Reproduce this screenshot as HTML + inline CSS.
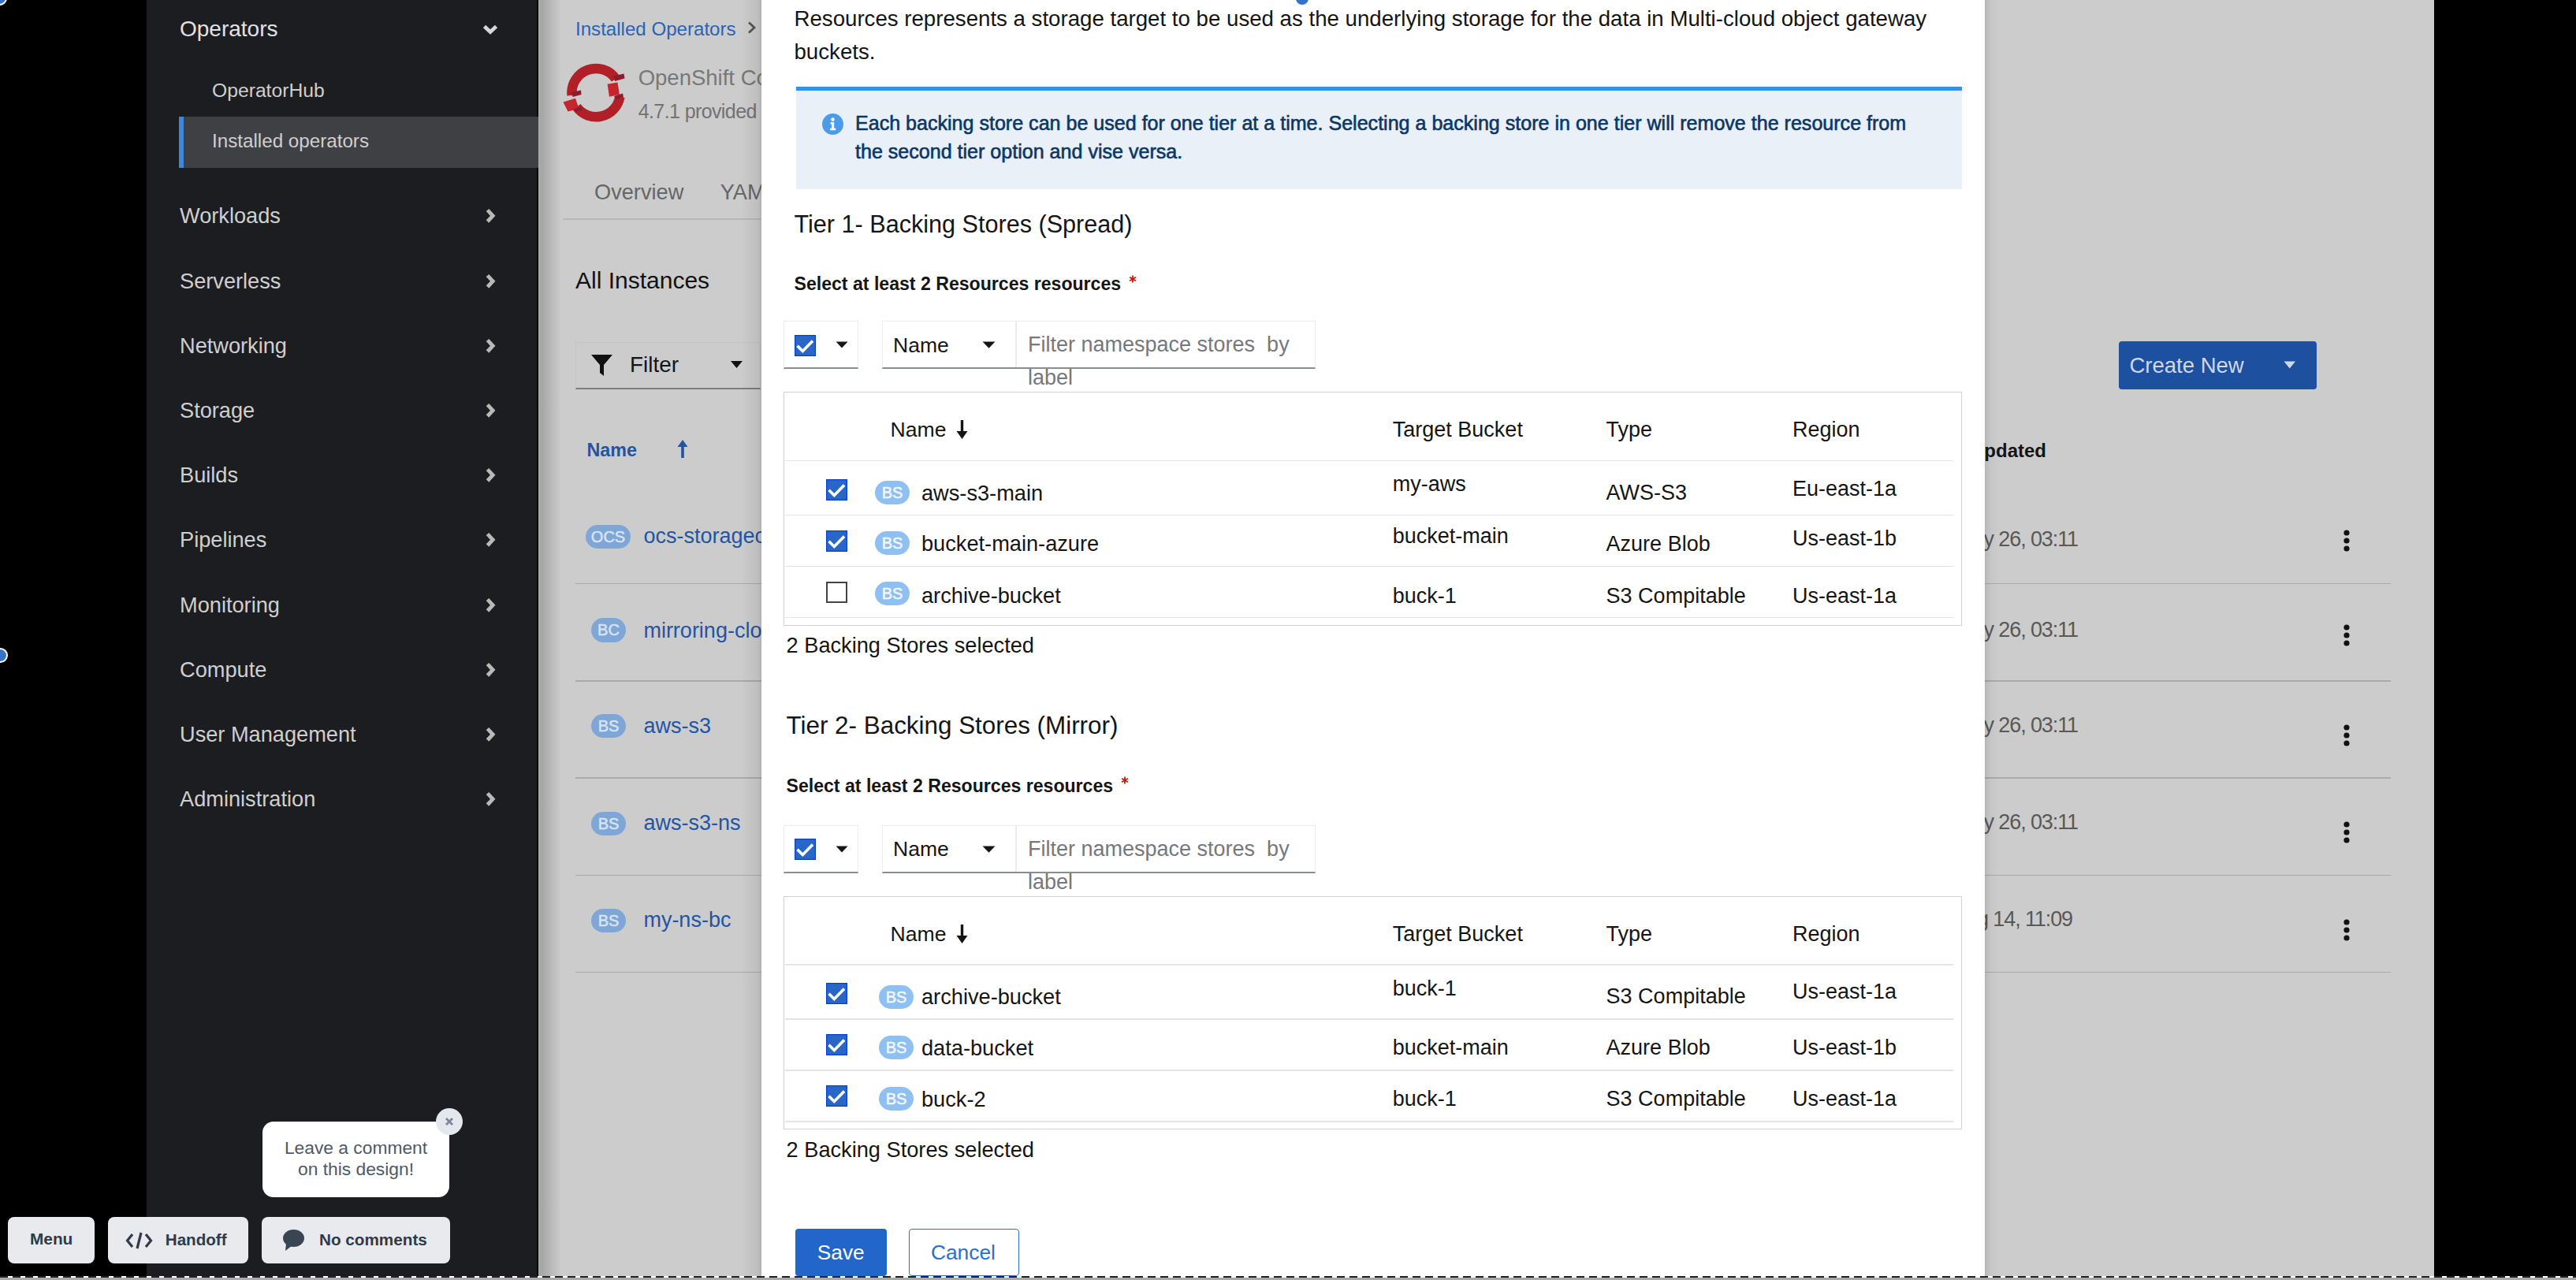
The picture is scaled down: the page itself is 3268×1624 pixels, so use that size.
<!DOCTYPE html>
<html><head><meta charset="utf-8"><style>
html,body{margin:0;padding:0;width:3268px;height:1624px;overflow:hidden;background:#000;}
body{position:relative;font-family:"Liberation Sans",sans-serif;}
.a{position:absolute;}
.t{position:absolute;line-height:1;white-space:pre;}
</style></head><body>
<div class="a" style="left:0.0px;top:0.0px;width:186.0px;height:1624.0px;background:#000"></div>
<div class="a" style="left:186.0px;top:0.0px;width:497.0px;height:1624.0px;background:#1c1d21"></div>
<div class="a" style="left:683.0px;top:0.0px;width:2405.0px;height:1624.0px;background:#cccccc"></div>
<div class="a" style="left:683.0px;top:0.0px;width:29.0px;height:1624.0px;background:linear-gradient(to right,#a9a9a9,#a6a6a6 15%,#cccccc)"></div>
<div class="a" style="left:681.0px;top:0.0px;width:2.0px;height:1624.0px;background:#050505"></div>
<div class="a" style="left:3088.0px;top:0.0px;width:180.0px;height:1624.0px;background:#000"></div>
<div class="t" style="left:228.0px;top:23.3px;font-size:28px;color:#e2e2e2;font-weight:400;">Operators</div>
<svg class="a" style="left:610px;top:29px" width="24" height="18" viewBox="0 0 24 18"><path d="M4.5 4.5 L12 11.5 L19.5 4.5" fill="none" stroke="#d6d6d6" stroke-width="4.8"/></svg>
<div class="t" style="left:269.0px;top:103.1px;font-size:24.7px;color:#cfcfcf;font-weight:400;">OperatorHub</div>
<div class="a" style="left:227.0px;top:148.0px;width:456.0px;height:64.5px;background:#3f4044"></div>
<div class="a" style="left:227.0px;top:148.0px;width:6.0px;height:64.5px;background:#3f87d9"></div>
<div class="t" style="left:269.0px;top:167.0px;font-size:24.2px;color:#cfcfcf;font-weight:400;">Installed operators</div>
<div class="t" style="left:228.0px;top:260.3px;font-size:27.2px;color:#cfcfcf;font-weight:400;">Workloads</div>
<svg class="a" style="left:612px;top:261.3px" width="18" height="24" viewBox="0 0 18 24"><path d="M6.5 5.5 L13.2 12.8 L6.5 20" fill="none" stroke="#b9b9b9" stroke-width="4.8"/></svg>
<div class="t" style="left:228.0px;top:342.5px;font-size:27.2px;color:#cfcfcf;font-weight:400;">Serverless</div>
<svg class="a" style="left:612px;top:343.5px" width="18" height="24" viewBox="0 0 18 24"><path d="M6.5 5.5 L13.2 12.8 L6.5 20" fill="none" stroke="#b9b9b9" stroke-width="4.8"/></svg>
<div class="t" style="left:228.0px;top:424.7px;font-size:27.2px;color:#cfcfcf;font-weight:400;">Networking</div>
<svg class="a" style="left:612px;top:425.7px" width="18" height="24" viewBox="0 0 18 24"><path d="M6.5 5.5 L13.2 12.8 L6.5 20" fill="none" stroke="#b9b9b9" stroke-width="4.8"/></svg>
<div class="t" style="left:228.0px;top:506.9px;font-size:27.2px;color:#cfcfcf;font-weight:400;">Storage</div>
<svg class="a" style="left:612px;top:507.9px" width="18" height="24" viewBox="0 0 18 24"><path d="M6.5 5.5 L13.2 12.8 L6.5 20" fill="none" stroke="#b9b9b9" stroke-width="4.8"/></svg>
<div class="t" style="left:228.0px;top:589.1px;font-size:27.2px;color:#cfcfcf;font-weight:400;">Builds</div>
<svg class="a" style="left:612px;top:590.1px" width="18" height="24" viewBox="0 0 18 24"><path d="M6.5 5.5 L13.2 12.8 L6.5 20" fill="none" stroke="#b9b9b9" stroke-width="4.8"/></svg>
<div class="t" style="left:228.0px;top:671.3px;font-size:27.2px;color:#cfcfcf;font-weight:400;">Pipelines</div>
<svg class="a" style="left:612px;top:672.3px" width="18" height="24" viewBox="0 0 18 24"><path d="M6.5 5.5 L13.2 12.8 L6.5 20" fill="none" stroke="#b9b9b9" stroke-width="4.8"/></svg>
<div class="t" style="left:228.0px;top:753.5px;font-size:27.2px;color:#cfcfcf;font-weight:400;">Monitoring</div>
<svg class="a" style="left:612px;top:754.5px" width="18" height="24" viewBox="0 0 18 24"><path d="M6.5 5.5 L13.2 12.8 L6.5 20" fill="none" stroke="#b9b9b9" stroke-width="4.8"/></svg>
<div class="t" style="left:228.0px;top:835.7px;font-size:27.2px;color:#cfcfcf;font-weight:400;">Compute</div>
<svg class="a" style="left:612px;top:836.7px" width="18" height="24" viewBox="0 0 18 24"><path d="M6.5 5.5 L13.2 12.8 L6.5 20" fill="none" stroke="#b9b9b9" stroke-width="4.8"/></svg>
<div class="t" style="left:228.0px;top:917.9px;font-size:27.2px;color:#cfcfcf;font-weight:400;">User Management</div>
<svg class="a" style="left:612px;top:918.9px" width="18" height="24" viewBox="0 0 18 24"><path d="M6.5 5.5 L13.2 12.8 L6.5 20" fill="none" stroke="#b9b9b9" stroke-width="4.8"/></svg>
<div class="t" style="left:228.0px;top:1000.1px;font-size:27.2px;color:#cfcfcf;font-weight:400;">Administration</div>
<svg class="a" style="left:612px;top:1001.1px" width="18" height="24" viewBox="0 0 18 24"><path d="M6.5 5.5 L13.2 12.8 L6.5 20" fill="none" stroke="#b9b9b9" stroke-width="4.8"/></svg>
<div class="a" style="left:-10.5px;top:-12px;width:15px;height:15px;border-radius:50%;background:#3673c6;border:2.5px solid #fff"></div>
<div class="a" style="left:-9px;top:822px;width:15px;height:15px;border-radius:50%;background:#3673c6;border:2.5px solid #fff"></div>
<div class="t" style="left:730.0px;top:24.9px;font-size:24.1px;color:#2a62b5;font-weight:400;">Installed Operators</div>
<svg class="a" style="left:947px;top:26px" width="14" height="18" viewBox="0 0 14 18"><path d="M3 2.5 L10 9 L3 15.5" fill="none" stroke="#555" stroke-width="2.8"/></svg>
<svg class="a" style="left:700px;top:70px" width="110" height="100" viewBox="700 70 110 100">
<path d="M725.6 120.8 A30.6 30.6 0 0 1 781.1 100.0" fill="none" stroke="#b11f27" stroke-width="12.5"/>
<path d="M786.4 123 A30.6 30.6 0 0 1 731.5 135.6" fill="none" stroke="#b11f27" stroke-width="12.5"/>
<polygon points="714.5,129.5 730,124.8 734.5,138 720.5,141.5" fill="#c6252b"/>
<polygon points="770.6,106.8 783.5,104.5 785.8,120 773,122.8" fill="#c6252b"/>
<polygon points="725,117 737,114.5 737.5,120 726.5,123" fill="#8e1c2d"/>
<polygon points="778,96.5 791.5,93.5 792.5,99.5 780,103" fill="#8e1c2d"/>
<polygon points="779,122 790,118.5 791,123.5 781,126" fill="#8e1c2d"/>
<polygon points="728,138.5 737,135 739,139.5 731,142" fill="#8e1c2d"/>
</svg>
<div class="t" style="left:809.7px;top:84.5px;font-size:27.5px;color:#787878;font-weight:400;">OpenShift Container Storage</div>
<div class="t" style="left:809.7px;top:129.4px;font-size:25px;color:#727272;font-weight:400;letter-spacing:-0.6px">4.7.1 provided by Red Hat</div>
<div class="t" style="left:754.0px;top:230.0px;font-size:27.2px;color:#666;font-weight:400;">Overview</div>
<div class="t" style="left:913.7px;top:230.0px;font-size:27.2px;color:#666;font-weight:400;">YAML</div>
<div class="a" style="left:714.0px;top:276.5px;width:251.0px;height:2.0px;background:#b8b8b8"></div>
<div class="t" style="left:730.0px;top:340.6px;font-size:30px;color:#121212;font-weight:400;">All Instances</div>
<div class="a" style="left:730.0px;top:434.0px;width:235.0px;height:60.0px;border:1.5px solid #c4c4c4;border-bottom:2px solid #7d7d7d;box-sizing:border-box"></div>
<svg class="a" style="left:749px;top:449px" width="30" height="30" viewBox="0 0 30 30"><path d="M1 1 H28 L17 14 V28 L12 24 V14 Z" fill="#111"/></svg>
<div class="t" style="left:799.0px;top:449.4px;font-size:27.9px;color:#151515;font-weight:400;">Filter</div>
<svg class="a" style="left:927px;top:458px" width="16" height="10" viewBox="0 0 16 10"><path d="M0 0 H15 L7.5 9 Z" fill="#111"/></svg>
<div class="t" style="left:744.5px;top:560.3px;font-size:23.3px;color:#2255a3;font-weight:700;">Name</div>
<svg class="a" style="left:858px;top:557px" width="16" height="26" viewBox="0 0 16 26"><path d="M8 1 L14.5 10 H9.8 V24 H6.2 V10 H1.5 Z" fill="#2255a3"/></svg>
<div class="a" style="left:743.0px;top:666.0px;width:57.0px;height:30.0px;border-radius:15.0px;background:#7ea7d8;color:#d8e4f2;font-size:20px;line-height:30.0px;text-align:center;font-weight:400;-webkit-text-stroke:0.5px #d8e4f2">OCS</div>
<div class="t" style="left:816.4px;top:667.1px;font-size:27px;color:#2255a3;font-weight:400;">ocs-storagecluster</div>
<div class="a" style="left:750.0px;top:784.0px;width:44.0px;height:31.0px;border-radius:15.5px;background:#7ea7d8;color:#d8e4f2;font-size:20px;line-height:31.0px;text-align:center;font-weight:400;-webkit-text-stroke:0.5px #d8e4f2">BC</div>
<div class="t" style="left:816.4px;top:786.6px;font-size:27px;color:#2255a3;font-weight:400;">mirroring-cloud</div>
<div class="a" style="left:750.0px;top:906.0px;width:44.0px;height:30.0px;border-radius:15.0px;background:#7ea7d8;color:#d8e4f2;font-size:20px;line-height:30.0px;text-align:center;font-weight:400;-webkit-text-stroke:0.5px #d8e4f2">BS</div>
<div class="t" style="left:816.4px;top:908.1px;font-size:27px;color:#2255a3;font-weight:400;">aws-s3</div>
<div class="a" style="left:750.0px;top:1029.5px;width:44.0px;height:30.1px;border-radius:15.0px;background:#7ea7d8;color:#d8e4f2;font-size:20px;line-height:30.1px;text-align:center;font-weight:400;-webkit-text-stroke:0.5px #d8e4f2">BS</div>
<div class="t" style="left:816.4px;top:1031.1px;font-size:27px;color:#2255a3;font-weight:400;">aws-s3-ns</div>
<div class="a" style="left:750.0px;top:1152.6px;width:44.0px;height:30.0px;border-radius:15.0px;background:#7ea7d8;color:#d8e4f2;font-size:20px;line-height:30.0px;text-align:center;font-weight:400;-webkit-text-stroke:0.5px #d8e4f2">BS</div>
<div class="t" style="left:816.4px;top:1154.1px;font-size:27px;color:#2255a3;font-weight:400;">my-ns-bc</div>
<div class="a" style="left:730.0px;top:739.5px;width:2303.0px;height:1.5px;background:#aaaaaa"></div>
<div class="a" style="left:730.0px;top:863.0px;width:2303.0px;height:1.5px;background:#aaaaaa"></div>
<div class="a" style="left:730.0px;top:986.0px;width:2303.0px;height:1.5px;background:#aaaaaa"></div>
<div class="a" style="left:730.0px;top:1109.5px;width:2303.0px;height:1.5px;background:#aaaaaa"></div>
<div class="a" style="left:730.0px;top:1232.5px;width:2303.0px;height:1.5px;background:#aaaaaa"></div>
<div class="a" style="left:2687.5px;top:433.0px;width:251.5px;height:61.0px;background:#1e50a0;border-radius:4px"></div>
<div class="t" style="left:2701.5px;top:449.7px;font-size:27.5px;color:#cfd8e8;font-weight:400;">Create New</div>
<svg class="a" style="left:2897px;top:458px" width="16" height="11" viewBox="0 0 16 11"><path d="M0.5 0.5 H15 L7.75 9.5 Z" fill="#cfd8e8"/></svg>
<div class="t" style="right:672.0px;top:559.7px;font-size:24px;color:#151515;font-weight:700;">Last updated</div>
<div class="t" style="right:632.0px;top:671.1px;font-size:27px;color:#585858;font-weight:400;letter-spacing:-1.1px">May 26, 03:11</div>
<div class="t" style="right:632.0px;top:786.1px;font-size:27px;color:#585858;font-weight:400;letter-spacing:-1.1px">May 26, 03:11</div>
<div class="t" style="right:632.0px;top:907.1px;font-size:27px;color:#585858;font-weight:400;letter-spacing:-1.1px">May 26, 03:11</div>
<div class="t" style="right:632.0px;top:1030.1px;font-size:27px;color:#585858;font-weight:400;letter-spacing:-1.1px">May 26, 03:11</div>
<div class="t" style="right:639.0px;top:1153.1px;font-size:27px;color:#585858;font-weight:400;letter-spacing:-1.1px">Aug 14, 11:09</div>
<svg class="a" style="left:2971px;top:670.5px" width="12" height="30" viewBox="0 0 12 30"><circle cx="6" cy="5" r="3.6" fill="#111"/><circle cx="6" cy="15" r="3.6" fill="#111"/><circle cx="6" cy="25" r="3.6" fill="#111"/></svg>
<svg class="a" style="left:2971px;top:791.0px" width="12" height="30" viewBox="0 0 12 30"><circle cx="6" cy="5" r="3.6" fill="#111"/><circle cx="6" cy="15" r="3.6" fill="#111"/><circle cx="6" cy="25" r="3.6" fill="#111"/></svg>
<svg class="a" style="left:2971px;top:918.0px" width="12" height="30" viewBox="0 0 12 30"><circle cx="6" cy="5" r="3.6" fill="#111"/><circle cx="6" cy="15" r="3.6" fill="#111"/><circle cx="6" cy="25" r="3.6" fill="#111"/></svg>
<svg class="a" style="left:2971px;top:1040.7px" width="12" height="30" viewBox="0 0 12 30"><circle cx="6" cy="5" r="3.6" fill="#111"/><circle cx="6" cy="15" r="3.6" fill="#111"/><circle cx="6" cy="25" r="3.6" fill="#111"/></svg>
<svg class="a" style="left:2971px;top:1165.0px" width="12" height="30" viewBox="0 0 12 30"><circle cx="6" cy="5" r="3.6" fill="#111"/><circle cx="6" cy="15" r="3.6" fill="#111"/><circle cx="6" cy="25" r="3.6" fill="#111"/></svg>
<div class="a" style="left:333.0px;top:1423.0px;width:237.0px;height:96.0px;background:#fff;border-radius:14px"></div>
<div class="t" style="left:151.5px;width:600px;text-align:center;top:1445.1px;font-size:22.8px;color:#4f5869;font-weight:400;">Leave a comment</div>
<div class="t" style="left:151.5px;width:600px;text-align:center;top:1472.3px;font-size:22.8px;color:#4f5869;font-weight:400;">on this design!</div>
<div class="a" style="left:553px;top:1406px;width:34px;height:34px;border-radius:50%;background:#e3e7ee"></div>
<svg class="a" style="left:563px;top:1416px" width="14" height="14" viewBox="0 0 14 14"><path d="M3 3 L11 11 M11 3 L3 11" stroke="#7d8797" stroke-width="2.8"/></svg>
<div class="a" style="left:10.0px;top:1544.0px;width:110.0px;height:59.0px;background:#e9eaed;border-radius:8px"></div>
<div class="a" style="left:137.0px;top:1544.0px;width:178.0px;height:59.0px;background:#e9eaed;border-radius:8px"></div>
<div class="a" style="left:331.5px;top:1544.0px;width:239.2px;height:59.0px;background:#e9eaed;border-radius:8px"></div>
<div class="t" style="left:38.0px;top:1562.4px;font-size:20.8px;color:#2f3a4a;font-weight:700;">Menu</div>
<svg class="a" style="left:159px;top:1561px" width="35" height="26" viewBox="0 0 35 26"><path d="M9 5 L2.5 13 L9 21 M26 5 L32.5 13 L26 21 M20 3 L15 23" fill="none" stroke="#2f3a4a" stroke-width="3.2"/></svg>
<div class="t" style="left:209.8px;top:1562.6px;font-size:20.6px;color:#2f3a4a;font-weight:700;">Handoff</div>
<svg class="a" style="left:358px;top:1559px" width="30" height="30" viewBox="0 0 30 30"><ellipse cx="14.5" cy="12" rx="13.5" ry="11" fill="#3a4553"/><path d="M5 19 L4 28 L13 21 Z" fill="#3a4553"/></svg>
<div class="t" style="left:405.0px;top:1562.5px;font-size:20.7px;color:#2f3a4a;font-weight:700;">No comments</div>
<div class="a" style="left:940.0px;top:0.0px;width:25.5px;height:1619.0px;background:linear-gradient(to right,rgba(0,0,0,0),rgba(0,0,0,0.07) 85%,rgba(0,0,0,0.14))"></div>
<div class="a" style="left:2518.0px;top:0.0px;width:18.0px;height:1619.0px;background:linear-gradient(to right,rgba(0,0,0,0.10),rgba(0,0,0,0.03) 40%,rgba(0,0,0,0))"></div>
<div class="a" style="left:965.5px;top:0.0px;width:1552.5px;height:1619.0px;background:#fff"></div>
<div class="t" style="left:1007.5px;top:10.3px;font-size:27.65px;color:#151515;font-weight:400;">Resources represents a storage target to be used as the underlying storage for the data in Multi-cloud object gateway</div>
<div class="t" style="left:1007.5px;top:51.6px;font-size:27.65px;color:#151515;font-weight:400;">buckets.</div>
<div class="a" style="left:1644px;top:-10px;width:16px;height:16px;border-radius:50%;background:#3673c6"></div>
<div class="a" style="left:1010.0px;top:110.0px;width:1479.0px;height:130.0px;background:#e9f0f8"></div>
<div class="a" style="left:1010.0px;top:110.0px;width:1479.0px;height:5.0px;background:#3590e8"></div>
<svg class="a" style="left:1043px;top:143.5px" width="27" height="27" viewBox="0 0 27 27"><circle cx="13.5" cy="13.5" r="13.5" fill="#4b9be9"/><circle cx="13.5" cy="7.6" r="2.3" fill="#fff"/><path d="M10.6 11 H15.2 V18.8 H17.2 V21.2 H10 V18.8 H12 V13.4 H10.6 Z" fill="#fff"/></svg>
<div class="t" style="left:1085.0px;top:144.4px;font-size:25.07px;color:#0b3766;font-weight:400;-webkit-text-stroke:0.6px #0b3766">Each backing store can be used for one tier at a time. Selecting a backing store in one tier will remove the resource from</div>
<div class="t" style="left:1085.0px;top:180.4px;font-size:25.07px;color:#0b3766;font-weight:400;-webkit-text-stroke:0.6px #0b3766">the second tier option and vise versa.</div>
<div class="t" style="left:1007.5px;top:269.1px;font-size:30.6px;color:#151515;font-weight:400;">Tier 1- Backing Stores (Spread)</div>
<div class="t" style="left:1007.5px;top:349.4px;font-size:23.1px;color:#151515;font-weight:700;">Select at least 2 Resources resources</div>
<svg class="a" style="left:1432.0px;top:349.0px" width="10" height="10" viewBox="0 0 10 10"><path d="M5 0.5 V9.5 M1 2.8 L9 7.2 M9 2.8 L1 7.2" stroke="#c9190b" stroke-width="1.8"/></svg>
<div class="a" style="left:993.5px;top:407.0px;width:95.5px;height:61.0px;border:1.5px solid #ececec;border-bottom:2px solid #8a8d90;box-sizing:border-box"></div>
<svg class="a" style="left:1007.5px;top:424.8px" width="27" height="27" viewBox="0 0 27 27"><rect x="0.6" y="0.6" width="25.8" height="25.8" fill="#2867c8" stroke="#0a3fcc" stroke-width="1.2"/><path d="M3.5 13.8 L10.3 20.5 L23 7.4" fill="none" stroke="#fff" stroke-width="3.6"/></svg>
<svg class="a" style="left:1060px;top:433.0px" width="16" height="10" viewBox="0 0 16 10"><path d="M0.5 0.5 H15.5 L8 8.5 Z" fill="#151515"/></svg>
<div class="a" style="left:1118.6px;top:407.0px;width:550.9px;height:61.0px;border:1.5px solid #ececec;border-bottom:2px solid #8a8d90;box-sizing:border-box"></div>
<div class="a" style="left:1288.0px;top:407.0px;width:2.0px;height:59.0px;background:#ececec"></div>
<div class="t" style="left:1133.0px;top:424.6px;font-size:26.5px;color:#151515;font-weight:400;">Name</div>
<svg class="a" style="left:1246px;top:433.0px" width="17" height="10" viewBox="0 0 17 10"><path d="M0.5 0.5 H16.5 L8.5 8.8 Z" fill="#151515"/></svg>
<div class="t" style="left:1304.0px;top:424.1px;font-size:27px;color:#75787c;font-weight:400;">Filter namespace stores  by</div>
<div class="t" style="left:1304.0px;top:466.1px;font-size:27px;color:#75787c;font-weight:400;">label</div>
<div class="a" style="left:994.0px;top:497.0px;width:1495.0px;height:296.5px;border:1.6px solid #d2d2d2;box-sizing:border-box"></div>
<div class="t" style="left:1129.6px;top:532.0px;font-size:26.6px;color:#151515;font-weight:400;">Name</div>
<svg class="a" style="left:1212px;top:532.0px" width="17" height="26" viewBox="0 0 17 26"><path d="M6.8 1 H10.2 V15 H15.5 L8.5 25 L1.5 15 H6.8 Z" fill="#151515"/></svg>
<div class="t" style="left:1766.8px;top:532.1px;font-size:27px;color:#151515;font-weight:400;">Target Bucket</div>
<div class="t" style="left:2037.6px;top:532.1px;font-size:27px;color:#151515;font-weight:400;">Type</div>
<div class="t" style="left:2274.0px;top:532.1px;font-size:27px;color:#151515;font-weight:400;">Region</div>
<div class="a" style="left:996.0px;top:583.5px;width:1482.0px;height:1.5px;background:#e4e4e4"></div>
<div class="a" style="left:996.0px;top:652.5px;width:1482.0px;height:1.5px;background:#e4e4e4"></div>
<div class="a" style="left:996.0px;top:717.5px;width:1482.0px;height:1.5px;background:#e4e4e4"></div>
<div class="a" style="left:996.0px;top:782.5px;width:1482.0px;height:1.5px;background:#e4e4e4"></div>
<svg class="a" style="left:1048.2px;top:608.0px" width="27" height="27" viewBox="0 0 27 27"><rect x="0.6" y="0.6" width="25.8" height="25.8" fill="#2867c8" stroke="#0a3fcc" stroke-width="1.2"/><path d="M3.5 13.8 L10.3 20.5 L23 7.4" fill="none" stroke="#fff" stroke-width="3.6"/></svg>
<div class="a" style="left:1110.0px;top:609.5px;width:44.0px;height:30.0px;border-radius:15.0px;background:#8fc0f2;color:#f4f8fd;font-size:20px;line-height:30.0px;text-align:center;font-weight:400;-webkit-text-stroke:0.5px #f4f8fd">BS</div>
<div class="t" style="left:1169.0px;top:611.6px;font-size:27.2px;color:#151515;font-weight:400;">aws-s3-main</div>
<div class="t" style="left:1766.8px;top:601.1px;font-size:27px;color:#151515;font-weight:400;">my-aws</div>
<div class="t" style="left:2037.6px;top:612.1px;font-size:27px;color:#151515;font-weight:400;">AWS-S3</div>
<div class="t" style="left:2274.0px;top:607.1px;font-size:27px;color:#151515;font-weight:400;">Eu-east-1a</div>
<svg class="a" style="left:1048.2px;top:672.6px" width="27" height="27" viewBox="0 0 27 27"><rect x="0.6" y="0.6" width="25.8" height="25.8" fill="#2867c8" stroke="#0a3fcc" stroke-width="1.2"/><path d="M3.5 13.8 L10.3 20.5 L23 7.4" fill="none" stroke="#fff" stroke-width="3.6"/></svg>
<div class="a" style="left:1110.0px;top:673.5px;width:44.0px;height:30.0px;border-radius:15.0px;background:#8fc0f2;color:#f4f8fd;font-size:20px;line-height:30.0px;text-align:center;font-weight:400;-webkit-text-stroke:0.5px #f4f8fd">BS</div>
<div class="t" style="left:1169.0px;top:676.0px;font-size:27.2px;color:#151515;font-weight:400;">bucket-main-azure</div>
<div class="t" style="left:1766.8px;top:666.5px;font-size:27px;color:#151515;font-weight:400;">bucket-main</div>
<div class="t" style="left:2037.6px;top:676.8px;font-size:27px;color:#151515;font-weight:400;">Azure Blob</div>
<div class="t" style="left:2274.0px;top:670.1px;font-size:27px;color:#151515;font-weight:400;">Us-east-1b</div>
<svg class="a" style="left:1048.2px;top:738.0px" width="27" height="27" viewBox="0 0 27 27"><rect x="1" y="1" width="25" height="25" fill="#fff" stroke="#444" stroke-width="2"/></svg>
<div class="a" style="left:1110.0px;top:738.0px;width:44.0px;height:30.0px;border-radius:15.0px;background:#8fc0f2;color:#f4f8fd;font-size:20px;line-height:30.0px;text-align:center;font-weight:400;-webkit-text-stroke:0.5px #f4f8fd">BS</div>
<div class="t" style="left:1169.0px;top:741.5px;font-size:27.2px;color:#151515;font-weight:400;">archive-bucket</div>
<div class="t" style="left:1766.8px;top:742.6px;font-size:27px;color:#151515;font-weight:400;">buck-1</div>
<div class="t" style="left:2037.6px;top:742.6px;font-size:27px;color:#151515;font-weight:400;">S3 Compitable</div>
<div class="t" style="left:2274.0px;top:742.6px;font-size:27px;color:#151515;font-weight:400;">Us-east-1a</div>
<div class="t" style="left:997.6px;top:805.4px;font-size:27.2px;color:#151515;font-weight:400;">2 Backing Stores selected</div>
<div class="t" style="left:997.5px;top:904.7px;font-size:31.4px;color:#151515;font-weight:400;">Tier 2- Backing Stores (Mirror)</div>
<div class="t" style="left:997.5px;top:985.7px;font-size:23.1px;color:#151515;font-weight:700;">Select at least 2 Resources resources</div>
<svg class="a" style="left:1422.0px;top:985.3px" width="10" height="10" viewBox="0 0 10 10"><path d="M5 0.5 V9.5 M1 2.8 L9 7.2 M9 2.8 L1 7.2" stroke="#c9190b" stroke-width="1.8"/></svg>
<div class="a" style="left:993.5px;top:1046.6px;width:95.5px;height:61.0px;border:1.5px solid #ececec;border-bottom:2px solid #8a8d90;box-sizing:border-box"></div>
<svg class="a" style="left:1007.5px;top:1064.4px" width="27" height="27" viewBox="0 0 27 27"><rect x="0.6" y="0.6" width="25.8" height="25.8" fill="#2867c8" stroke="#0a3fcc" stroke-width="1.2"/><path d="M3.5 13.8 L10.3 20.5 L23 7.4" fill="none" stroke="#fff" stroke-width="3.6"/></svg>
<svg class="a" style="left:1060px;top:1072.6px" width="16" height="10" viewBox="0 0 16 10"><path d="M0.5 0.5 H15.5 L8 8.5 Z" fill="#151515"/></svg>
<div class="a" style="left:1118.6px;top:1046.6px;width:550.9px;height:61.0px;border:1.5px solid #ececec;border-bottom:2px solid #8a8d90;box-sizing:border-box"></div>
<div class="a" style="left:1288.0px;top:1046.6px;width:2.0px;height:59.0px;background:#ececec"></div>
<div class="t" style="left:1133.0px;top:1064.2px;font-size:26.5px;color:#151515;font-weight:400;">Name</div>
<svg class="a" style="left:1246px;top:1072.6px" width="17" height="10" viewBox="0 0 17 10"><path d="M0.5 0.5 H16.5 L8.5 8.8 Z" fill="#151515"/></svg>
<div class="t" style="left:1304.0px;top:1063.7px;font-size:27px;color:#75787c;font-weight:400;">Filter namespace stores  by</div>
<div class="t" style="left:1304.0px;top:1105.7px;font-size:27px;color:#75787c;font-weight:400;">label</div>
<div class="a" style="left:994.0px;top:1136.6px;width:1495.0px;height:296.5px;border:1.6px solid #d2d2d2;box-sizing:border-box"></div>
<div class="t" style="left:1129.6px;top:1171.6px;font-size:26.6px;color:#151515;font-weight:400;">Name</div>
<svg class="a" style="left:1212px;top:1171.6px" width="17" height="26" viewBox="0 0 17 26"><path d="M6.8 1 H10.2 V15 H15.5 L8.5 25 L1.5 15 H6.8 Z" fill="#151515"/></svg>
<div class="t" style="left:1766.8px;top:1171.7px;font-size:27px;color:#151515;font-weight:400;">Target Bucket</div>
<div class="t" style="left:2037.6px;top:1171.7px;font-size:27px;color:#151515;font-weight:400;">Type</div>
<div class="t" style="left:2274.0px;top:1171.7px;font-size:27px;color:#151515;font-weight:400;">Region</div>
<div class="a" style="left:996.0px;top:1223.1px;width:1482.0px;height:1.5px;background:#e4e4e4"></div>
<div class="a" style="left:996.0px;top:1292.1px;width:1482.0px;height:1.5px;background:#e4e4e4"></div>
<div class="a" style="left:996.0px;top:1357.1px;width:1482.0px;height:1.5px;background:#e4e4e4"></div>
<div class="a" style="left:996.0px;top:1422.1px;width:1482.0px;height:1.5px;background:#e4e4e4"></div>
<svg class="a" style="left:1048.2px;top:1246.8px" width="27" height="27" viewBox="0 0 27 27"><rect x="0.6" y="0.6" width="25.8" height="25.8" fill="#2867c8" stroke="#0a3fcc" stroke-width="1.2"/><path d="M3.5 13.8 L10.3 20.5 L23 7.4" fill="none" stroke="#fff" stroke-width="3.6"/></svg>
<div class="a" style="left:1115.0px;top:1250.0px;width:44.0px;height:30.0px;border-radius:15.0px;background:#8fc0f2;color:#f4f8fd;font-size:20px;line-height:30.0px;text-align:center;font-weight:400;-webkit-text-stroke:0.5px #f4f8fd">BS</div>
<div class="t" style="left:1169.0px;top:1251.0px;font-size:27.2px;color:#151515;font-weight:400;">archive-bucket</div>
<div class="t" style="left:1766.8px;top:1240.7px;font-size:27px;color:#151515;font-weight:400;">buck-1</div>
<div class="t" style="left:2037.6px;top:1251.1px;font-size:27px;color:#151515;font-weight:400;">S3 Compitable</div>
<div class="t" style="left:2274.0px;top:1245.1px;font-size:27px;color:#151515;font-weight:400;">Us-east-1a</div>
<svg class="a" style="left:1048.2px;top:1312.0px" width="27" height="27" viewBox="0 0 27 27"><rect x="0.6" y="0.6" width="25.8" height="25.8" fill="#2867c8" stroke="#0a3fcc" stroke-width="1.2"/><path d="M3.5 13.8 L10.3 20.5 L23 7.4" fill="none" stroke="#fff" stroke-width="3.6"/></svg>
<div class="a" style="left:1115.0px;top:1313.7px;width:44.0px;height:30.0px;border-radius:15.0px;background:#8fc0f2;color:#f4f8fd;font-size:20px;line-height:30.0px;text-align:center;font-weight:400;-webkit-text-stroke:0.5px #f4f8fd">BS</div>
<div class="t" style="left:1169.0px;top:1316.0px;font-size:27.2px;color:#151515;font-weight:400;">data-bucket</div>
<div class="t" style="left:1766.8px;top:1315.9px;font-size:27px;color:#151515;font-weight:400;">bucket-main</div>
<div class="t" style="left:2037.6px;top:1315.9px;font-size:27px;color:#151515;font-weight:400;">Azure Blob</div>
<div class="t" style="left:2274.0px;top:1315.9px;font-size:27px;color:#151515;font-weight:400;">Us-east-1b</div>
<svg class="a" style="left:1048.2px;top:1377.0px" width="27" height="27" viewBox="0 0 27 27"><rect x="0.6" y="0.6" width="25.8" height="25.8" fill="#2867c8" stroke="#0a3fcc" stroke-width="1.2"/><path d="M3.5 13.8 L10.3 20.5 L23 7.4" fill="none" stroke="#fff" stroke-width="3.6"/></svg>
<div class="a" style="left:1115.0px;top:1378.8px;width:44.0px;height:30.0px;border-radius:15.0px;background:#8fc0f2;color:#f4f8fd;font-size:20px;line-height:30.0px;text-align:center;font-weight:400;-webkit-text-stroke:0.5px #f4f8fd">BS</div>
<div class="t" style="left:1169.0px;top:1380.7px;font-size:27.2px;color:#151515;font-weight:400;">buck-2</div>
<div class="t" style="left:1766.8px;top:1381.1px;font-size:27px;color:#151515;font-weight:400;">buck-1</div>
<div class="t" style="left:2037.6px;top:1381.1px;font-size:27px;color:#151515;font-weight:400;">S3 Compitable</div>
<div class="t" style="left:2274.0px;top:1381.1px;font-size:27px;color:#151515;font-weight:400;">Us-east-1a</div>
<div class="t" style="left:997.6px;top:1445.0px;font-size:27.2px;color:#151515;font-weight:400;">2 Backing Stores selected</div>
<div class="a" style="left:1009.0px;top:1558.7px;width:115.6px;height:60.3px;background:#2366c9;border-radius:4px"></div>
<div class="t" style="left:1036.8px;top:1575.5px;font-size:26.3px;color:#fff;font-weight:400;">Save</div>
<div class="a" style="left:1153.0px;top:1558.7px;width:139.5px;height:60.3px;border:1.8px solid #2a6fd0;border-radius:4px;box-sizing:border-box;background:#fff"></div>
<div class="t" style="left:1181.0px;top:1575.5px;font-size:26.3px;color:#2a6fd0;font-weight:400;">Cancel</div>
<div class="a" style="left:0.0px;top:1619.0px;width:3268.0px;height:5.0px;background:#a9a9a9"></div>
<div class="a" style="left:0.0px;top:1618.5px;width:3268.0px;height:2.0px;background:repeating-linear-gradient(to right,#222 0 10px,#fff 10px 16px)"></div>
</body></html>
